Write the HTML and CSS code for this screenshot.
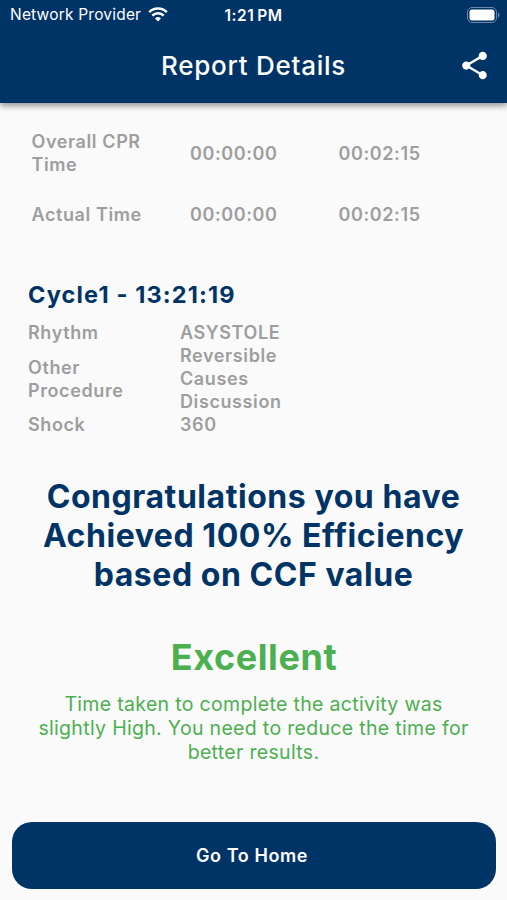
FILE: index.html
```html
<!DOCTYPE html>
<html lang="en">
<head>
    <meta charset="UTF-8">
    <meta name="viewport" content="width=device-width, initial-scale=1.0">
    <title>Report Details</title>
    <link rel="stylesheet" href="styles.css">
</head>
<body>
    <header class="header">
        <div class="status-bar">
            <div class="carrier">
                <span class="carrier-name">Network Provider</span>
                <svg class="wifi" viewBox="0 0 20 15" width="20" height="15">
                    <path d="M1.2 5.2a12.4 12.4 0 0 1 17.6 0M4.3 8.6a8 8 0 0 1 11.4 0" fill="none" stroke="#fff" stroke-width="2.5"/>
                    <path d="M10 14.5l-3-3a4.3 4.3 0 0 1 6 0z" fill="#fff"/>
                </svg>
            </div>
            <span class="clock">1:21 PM</span>
            <svg class="battery" viewBox="0 0 33 16" width="33" height="16">
                <rect x="0.5" y="0.5" width="29" height="15" rx="4.5" fill="none" stroke="#6d87a6"/>
                <rect x="2.5" y="2.5" width="25" height="11" rx="2.5" fill="#fff"/>
                <path d="M31 5.5c2 .8 2 4.2 0 5z" fill="#6d87a6"/>
            </svg>
        </div>
        <div class="title-bar">
            <h1 class="title">Report Details</h1>
            <svg class="share" viewBox="0 0 24 24" width="33" height="33">
                <path fill="#fff" d="M18 16.08c-.76 0-1.44.3-1.96.77L8.91 12.7c.05-.23.09-.46.09-.7s-.04-.47-.09-.7l7.05-4.11c.54.5 1.25.81 2.04.81 1.66 0 3-1.34 3-3s-1.34-3-3-3-3 1.34-3 3c0 .24.04.47.09.7L8.04 9.81C7.5 9.31 6.79 9 6 9c-1.66 0-3 1.34-3 3s1.34 3 3 3c.79 0 1.5-.31 2.04-.81l7.12 4.16c-.05.21-.08.43-.08.65 0 1.61 1.31 2.92 2.92 2.92s2.92-1.31 2.92-2.92-1.31-2.92-2.92-2.92z"/>
            </svg>
        </div>
    </header>

    <main class="content">
        <div class="times">
            <div class="times-row">
                <span class="label">Overall CPR<br>Time</span>
                <span class="start">00:00:00</span>
                <span class="end">00:02:15</span>
            </div>
            <div class="times-row">
                <span class="label">Actual Time</span>
                <span class="start">00:00:00</span>
                <span class="end">00:02:15</span>
            </div>
        </div>

        <section class="cycle">
            <h2 class="cycle-title">Cycle1 - 13:21:19</h2>
            <div class="cycle-row">
                <span>Rhythm</span>
                <span>ASYSTOLE</span>
            </div>
            <div class="cycle-row">
                <span>Other<br>Procedure</span>
                <span>Reversible<br>Causes<br>Discussion</span>
            </div>
            <div class="cycle-row">
                <span>Shock</span>
                <span>360</span>
            </div>
        </section>

        <h2 class="congrats">Congratulations you have<br>Achieved 100% Efficiency<br>based on CCF value</h2>
        <h3 class="grade">Excellent</h3>
        <p class="advice">Time taken to complete the activity was<br>slightly High. You need to reduce the time for<br>better results.</p>
    </main>

    <button class="home-btn">Go To Home</button>
</body>
</html>
```

FILE: styles.css
```css
* {
    box-sizing: border-box;
}
body {
    margin: 0;
    height: 900px;
    display: flex;
    flex-direction: column;
    background: #fafafa;
    font-family: Inter, "Liberation Sans", sans-serif;
    overflow: hidden;
}
h1, h2, h3, p {
    margin: 0;
}
.header {
    height: 103px;
    background: #003366;
    color: #fff;
    box-shadow: 0 3px 6px rgba(0,0,0,0.4);
}
.status-bar {
    height: 29px;
    display: grid;
    grid-template-columns: 1fr auto 1fr;
    align-items: center;
    padding: 0 7px 0 10px;
}
.carrier {
    display: flex;
    align-items: center;
    gap: 7px;
}
.carrier-name {
    font-size: 15.5px;
    letter-spacing: 0.2px;
}
.clock {
    padding: 2px 3px 0 0;
    font-size: 15.5px;
    font-weight: 600;
    letter-spacing: 0.5px;
    word-spacing: -1.5px;
}
.battery {
    justify-self: end;
}
.title-bar {
    height: 73px;
    display: grid;
    grid-template-columns: 1fr auto 1fr;
    align-items: center;
    padding: 0 16px;
}
.title {
    grid-column: 2;
    font-size: 26px;
    font-weight: 500;
    letter-spacing: 0.75px;
}
.share {
    justify-self: end;
}
.content {
    flex: 1;
}
.times {
    padding: 27px 31.5px 0;
    color: #9e9e9e;
    font-size: 18px;
    font-weight: 600;
    line-height: 23px;
    letter-spacing: 0.6px;
}
.times-row {
    display: grid;
    grid-template-columns: 158.5px 148.5px 1fr;
    align-items: center;
    margin-bottom: 27px;
}
.cycle {
    padding: 26px 28px 0;
    color: #9e9e9e;
    font-size: 18px;
    font-weight: 600;
    line-height: 23px;
    letter-spacing: 0.6px;
}
.cycle-title {
    padding-top: 1px;
    margin-bottom: 11px;
    color: #003366;
    font-size: 23.5px;
    font-weight: 700;
    line-height: 30px;
    letter-spacing: 1.15px;
}
.cycle-row {
    display: grid;
    grid-template-columns: 152px 1fr;
    align-items: center;
}
.congrats {
    margin-top: 41px;
    color: #003366;
    font-size: 32px;
    font-weight: 700;
    line-height: 39px;
    letter-spacing: 0.55px;
    text-align: center;
}
.grade {
    margin-top: 40px;
    padding-left: 1px;
    color: #4caf50;
    font-size: 36px;
    font-weight: 700;
    line-height: 46px;
    letter-spacing: 0.6px;
    text-align: center;
}
.advice {
    margin-top: 12px;
    color: #4caf50;
    font-size: 19.5px;
    line-height: 24px;
    letter-spacing: 0.32px;
    text-align: center;
}
.home-btn {
    height: 67px;
    margin: 0 11px 11px 12px;
    padding: 0 4px 0 0;
    border: none;
    border-radius: 20px;
    background: #003366;
    color: #fff;
    font-family: inherit;
    font-size: 18px;
    font-weight: 600;
    letter-spacing: 0.6px;
}
```
